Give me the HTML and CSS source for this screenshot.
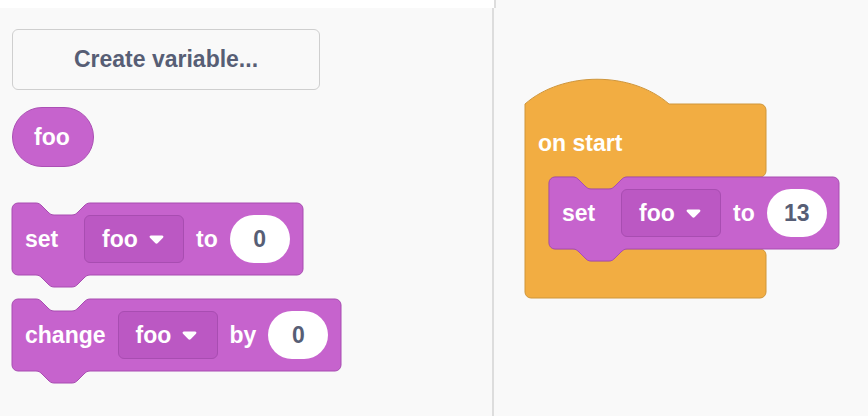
FILE: index.html
```html
<!DOCTYPE html>
<html>
<head>
<meta charset="utf-8">
<link rel="stylesheet" href="styles.css">
</head>
<body>
<div class="app">
  <div class="flyout">
    <div class="topstrip"></div>
    <button class="create-btn">Create variable...</button>
    <div class="reporter">foo</div>
    <div class="block fly-set">
      <svg class="block-shape" width="291" height="86"><path class="shape-var" d="M0,6 A6,6 0 0 1 6,0 H24 c3,0 4.5,1.5 6,3 l6,6 c1.5,1.5 3,3 6,3 h18 c3,0 4.5,-1.5 6,-3 l6,-6 c1.5,-1.5 3,-3 6,-3 H285 A6,6 0 0 1 291,6 V66 A6,6 0 0 1 285,72 H78 c-3,0 -4.5,1.5 -6,3 l-6,6 c-1.5,1.5 -3,3 -6,3 h-18 c-3,0 -4.5,-1.5 -6,-3 l-6,-6 c-1.5,-1.5 -3,-3 -6,-3 H6 A6,6 0 0 1 0,66 Z"/></svg>
      <span class="label label-set">set</span>
      <div class="dropdown"><span>foo</span><svg class="caret" width="15" height="9" viewBox="0 0 15 9"><path d="M2,0.5 h11 c1.3,0 1.9,1.4 1,2.3 l-5.4,5.5 c-0.6,0.6 -1.6,0.6 -2.2,0 L1,2.8 C0.1,1.9 0.7,0.5 2,0.5 Z"/></svg></div>
      <span class="label">to</span>
      <div class="num-input">0</div>
    </div>
    <div class="block fly-change">
      <svg class="block-shape" width="329" height="86"><path class="shape-var" d="M0,6 A6,6 0 0 1 6,0 H24 c3,0 4.5,1.5 6,3 l6,6 c1.5,1.5 3,3 6,3 h18 c3,0 4.5,-1.5 6,-3 l6,-6 c1.5,-1.5 3,-3 6,-3 H323 A6,6 0 0 1 329,6 V66 A6,6 0 0 1 323,72 H78 c-3,0 -4.5,1.5 -6,3 l-6,6 c-1.5,1.5 -3,3 -6,3 h-18 c-3,0 -4.5,-1.5 -6,-3 l-6,-6 c-1.5,-1.5 -3,-3 -6,-3 H6 A6,6 0 0 1 0,66 Z"/></svg>
      <span class="label">change</span>
      <div class="dropdown"><span>foo</span><svg class="caret" width="15" height="9" viewBox="0 0 15 9"><path d="M2,0.5 h11 c1.3,0 1.9,1.4 1,2.3 l-5.4,5.5 c-0.6,0.6 -1.6,0.6 -2.2,0 L1,2.8 C0.1,1.9 0.7,0.5 2,0.5 Z"/></svg></div>
      <span class="label">by</span>
      <div class="num-input">0</div>
    </div>
  </div>
  <div class="divider"><div class="divider-top"></div><div class="divider-line"></div></div>
  <div class="workspace">
    <div class="hat">
      <svg class="hat-shape" width="241" height="194"><path class="shape-event" d="M0,0 C37.5,-33 106.5,-33 144,0 H235 A6,6 0 0 1 241,6 V67 A6,6 0 0 1 235,73 H102 c-3,0 -4.5,1.5 -6,3 l-6,6 c-1.5,1.5 -3,3 -6,3 h-18 c-3,0 -4.5,-1.5 -6,-3 l-6,-6 c-1.5,-1.5 -3,-3 -6,-3 H30 A6,6 0 0 0 24,79 V139 A6,6 0 0 0 30,145 H48 c3,0 4.5,1.5 6,3 l6,6 c1.5,1.5 3,3 6,3 h18 c3,0 4.5,-1.5 6,-3 l6,-6 c1.5,-1.5 3,-3 6,-3 H235 A6,6 0 0 1 241,151 V188 A6,6 0 0 1 235,194 H6 A6,6 0 0 1 0,188 Z"/></svg>
      <div class="hat-label">on start</div>
      <div class="hat-inner">
        <div class="block ws-set">
          <svg class="block-shape" width="290" height="86"><path class="shape-var" d="M0,6 A6,6 0 0 1 6,0 H24 c3,0 4.5,1.5 6,3 l6,6 c1.5,1.5 3,3 6,3 h18 c3,0 4.5,-1.5 6,-3 l6,-6 c1.5,-1.5 3,-3 6,-3 H284 A6,6 0 0 1 290,6 V66 A6,6 0 0 1 284,72 H78 c-3,0 -4.5,1.5 -6,3 l-6,6 c-1.5,1.5 -3,3 -6,3 h-18 c-3,0 -4.5,-1.5 -6,-3 l-6,-6 c-1.5,-1.5 -3,-3 -6,-3 H6 A6,6 0 0 1 0,66 Z"/></svg>
          <span class="label label-set">set</span>
          <div class="dropdown"><span>foo</span><svg class="caret" width="15" height="9" viewBox="0 0 15 9"><path d="M2,0.5 h11 c1.3,0 1.9,1.4 1,2.3 l-5.4,5.5 c-0.6,0.6 -1.6,0.6 -2.2,0 L1,2.8 C0.1,1.9 0.7,0.5 2,0.5 Z"/></svg></div>
          <span class="label">to</span>
          <div class="num-input">13</div>
        </div>
      </div>
      <div class="hat-arm"></div>
    </div>
  </div>
</div>
</body>
</html>
```

FILE: styles.css
```css
html, body {
  margin: 0;
  padding: 0;
}
body {
  width: 868px;
  height: 416px;
  overflow: hidden;
  background: #f9f9f9;
  font-family: "Liberation Sans", Arial, sans-serif;
}
.app {
  display: flex;
  height: 416px;
}
.flyout {
  width: 492px;
  flex: none;
  box-sizing: border-box;
  padding-left: 12px;
  display: flex;
  flex-direction: column;
  align-items: flex-start;
}
.topstrip {
  align-self: stretch;
  margin-left: -12px;
  height: 8px;
  background: #ffffff;
}
.create-btn {
  margin-top: 21px;
  width: 308px;
  height: 61px;
  box-sizing: border-box;
  border: 1.5px solid #cfcfcf;
  border-radius: 6px;
  background: #f9f9f9;
  color: #575e75;
  font-family: "Liberation Sans", Arial, sans-serif;
  font-weight: bold;
  font-size: 23px;
  padding: 0;
}
.reporter {
  margin-top: 17px;
  height: 60px;
  box-sizing: border-box;
  padding: 0 23px 0 21px;
  border-radius: 30px;
  background: #c663cd;
  border: 1px solid #ab50b4;
  color: #ffffff;
  font-weight: bold;
  font-size: 23px;
  display: flex;
  align-items: center;
}
.block {
  position: relative;
  flex: none;
  display: flex;
  align-items: center;
  gap: 12px;
  height: 72px;
  box-sizing: border-box;
  padding: 0 12px 0 13px;
}
.fly-set {
  width: 291px;
  margin-top: 36px;
}
.fly-change {
  width: 329px;
  margin-top: 24px;
}
.ws-set {
  width: 290px;
}
.block-shape {
  position: absolute;
  left: 0;
  top: 0;
  overflow: visible;
}
.shape-var {
  fill: #c663cd;
  stroke: #a84db1;
  stroke-width: 1;
}
.shape-event {
  fill: #f2ad42;
  stroke: #cf963b;
  stroke-width: 1;
}
.label {
  position: relative;
  color: #ffffff;
  font-weight: bold;
  font-size: 23px;
  white-space: nowrap;
}
.label-set {
  width: 47px;
}
.dropdown {
  position: relative;
  box-sizing: border-box;
  width: 100px;
  height: 48px;
  display: flex;
  align-items: center;
  gap: 11px;
  padding-left: 17px;
  background: #bb58c3;
  border: 1px solid #a84db1;
  border-radius: 6px;
  color: #ffffff;
  font-weight: bold;
  font-size: 23px;
}
.caret {
  fill: #ffffff;
  display: block;
  margin-top: 1px;
}
.num-input {
  position: relative;
  box-sizing: border-box;
  height: 48px;
  min-width: 60px;
  padding: 0 12px;
  border-radius: 24px;
  background: #ffffff;
  color: #575e75;
  font-weight: bold;
  font-size: 23px;
  display: flex;
  align-items: center;
  justify-content: center;
}
.divider {
  width: 2px;
  flex: none;
  display: flex;
  flex-direction: column;
}
.divider-top {
  height: 8px;
  background: #ffffff;
}
.divider-line {
  flex: 1;
  background: #dddddd;
}
.workspace {
  position: relative;
  flex: 1;
}
.workspace::before {
  content: "";
  position: absolute;
  left: 0;
  top: 0;
  width: 2px;
  height: 8px;
  background: #dddddd;
}
.hat {
  position: absolute;
  left: 31px;
  top: 104px;
  width: 241px;
  display: flex;
  flex-direction: column;
}
.hat-shape {
  position: absolute;
  left: 0;
  top: 0;
  overflow: visible;
}
.hat-label {
  position: relative;
  height: 73px;
  box-sizing: border-box;
  padding: 5px 0 0 13px;
  display: flex;
  align-items: center;
  color: #ffffff;
  font-weight: bold;
  font-size: 23px;
}
.hat-inner {
  position: relative;
  height: 72px;
  padding-left: 24px;
}
.hat-arm {
  height: 49px;
}
```
